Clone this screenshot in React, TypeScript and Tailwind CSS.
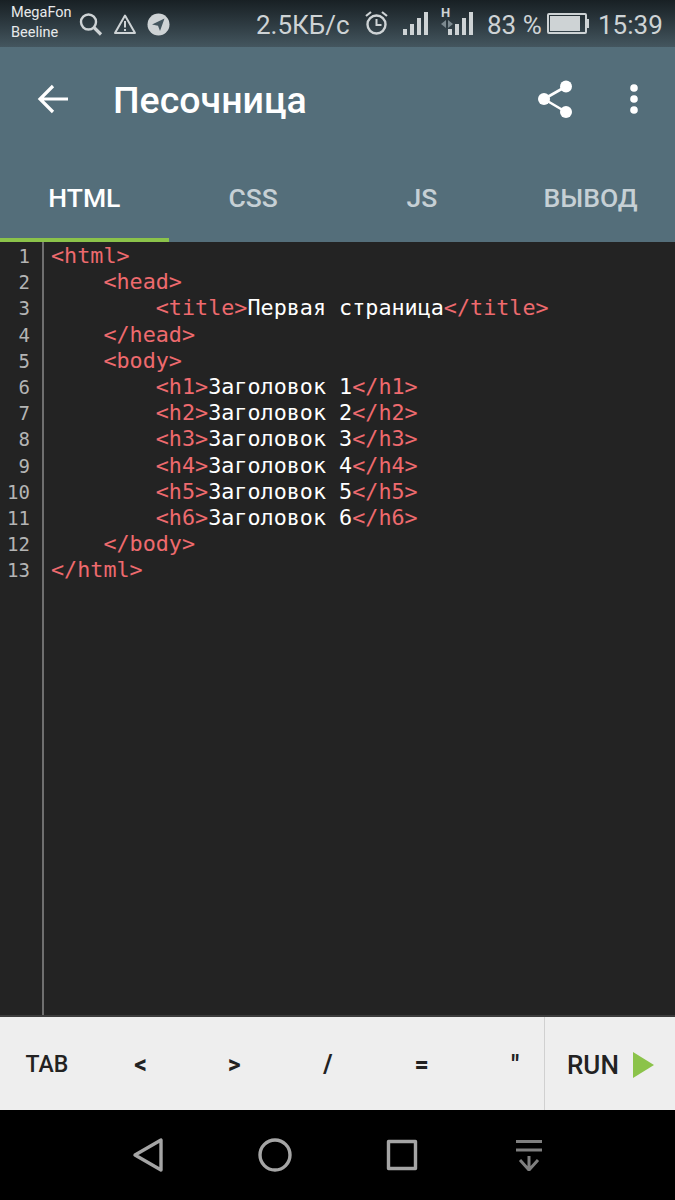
import React from 'react';

// Строки редактора: отступ в символах, теги и текст
const codeLines: { indent: number; open: string; text?: string; close?: string }[] = [
  { indent: 0, open: '<html>' },
  { indent: 4, open: '<head>' },
  { indent: 8, open: '<title>', text: 'Первая страница', close: '</title>' },
  { indent: 4, open: '</head>' },
  { indent: 4, open: '<body>' },
  { indent: 8, open: '<h1>', text: 'Заголовок 1', close: '</h1>' },
  { indent: 8, open: '<h2>', text: 'Заголовок 2', close: '</h2>' },
  { indent: 8, open: '<h3>', text: 'Заголовок 3', close: '</h3>' },
  { indent: 8, open: '<h4>', text: 'Заголовок 4', close: '</h4>' },
  { indent: 8, open: '<h5>', text: 'Заголовок 5', close: '</h5>' },
  { indent: 8, open: '<h6>', text: 'Заголовок 6', close: '</h6>' },
  { indent: 4, open: '</body>' },
  { indent: 0, open: '</html>' },
];

const tabs = ['HTML', 'CSS', 'JS', 'ВЫВОД'];
const symbolKeys = ['<', '>', '/', '=', '"'];

const StatusBar: React.FC = () => (
  <div className="relative h-[47px] bg-gradient-to-b from-[#182024] to-[#44565f] text-[#ced3d5]">
    <div className="absolute left-[11px] top-[3px] text-[14.5px] leading-[20px] text-[#e8eaeb]">
      <div>MegaFon</div>
      <div>Beeline</div>
    </div>
    <svg className="absolute left-[78px] top-[12px]" width="26" height="24" viewBox="0 0 26 24" fill="none" stroke="#ced3d5">
      <circle cx="10.5" cy="10" r="7.5" strokeWidth="2.4" />
      <path d="M16 15.5l7 7" strokeWidth="3.2" />
    </svg>
    <svg className="absolute left-[113px] top-[13px]" width="24" height="22" viewBox="0 0 24 22" fill="none">
      <path d="M12 2.5L22 20H2Z" stroke="#ced3d5" strokeWidth="2" strokeLinejoin="round" />
      <path d="M12 8v6.5M12 16v2" stroke="#ced3d5" strokeWidth="2" />
    </svg>
    <svg className="absolute left-[147px] top-[13px]" width="23" height="23" viewBox="0 0 23 23">
      <circle cx="11.5" cy="11.5" r="11" fill="#ced3d5" />
      <path d="M5 11.5L17.5 5.5 13 18l-2-5.2Z" fill="#44565f" />
    </svg>
    <span className="absolute left-[256px] top-[8px] text-[26px] leading-[34px]">2.5КБ/с</span>
    <svg className="absolute left-[364px] top-[10px]" width="25" height="26" viewBox="0 0 25 26" fill="none" stroke="#ced3d5">
      <circle cx="12.5" cy="14.5" r="9" strokeWidth="2.4" />
      <path d="M12.5 9v6h5" strokeWidth="2" />
      <path d="M2 6l5-4M23 6l-5-4" strokeWidth="2.2" />
    </svg>
    <div className="absolute left-[403px] top-[12px] flex h-[23px] items-end gap-[3px]">
      <div className="h-[6px] w-[4px] bg-[#ced3d5]" />
      <div className="h-[11px] w-[4px] bg-[#ced3d5]" />
      <div className="h-[17px] w-[4px] bg-[#ced3d5]" />
      <div className="h-[23px] w-[4px] bg-[#ced3d5]" />
    </div>
    <span className="absolute left-[441px] top-[6px] text-[13px] font-bold leading-[14px]">H</span>
    <svg className="absolute left-[441px] top-[20px]" width="12" height="8" viewBox="0 0 12 8" fill="#7d8a90">
      <path d="M5 0v8L0 4ZM7 0v8l5-4Z" />
    </svg>
    <div className="absolute left-[448px] top-[12px] flex h-[23px] items-end gap-[3px]">
      <div className="h-[6px] w-[4px] bg-[#ced3d5]" />
      <div className="h-[11px] w-[4px] bg-[#ced3d5]" />
      <div className="h-[17px] w-[4px] bg-[#ced3d5]" />
      <div className="h-[23px] w-[4px] bg-[#ced3d5]" />
    </div>
    <span className="absolute left-[487px] top-[8px] text-[26px] leading-[34px]">83 %</span>
    <div className="absolute left-[547px] top-[13px] flex h-[21px] w-[40px] items-center rounded-[2px] border-2 border-[#ced3d5] p-[1px]">
      <div className="h-full w-[30px] bg-[#ced3d5]" />
    </div>
    <div className="absolute left-[587px] top-[19px] h-[9px] w-[2px] bg-[#ced3d5]" />
    <span className="absolute left-[598px] top-[8px] text-[26px] leading-[34px]">15:39</span>
  </div>
);

const AppBar: React.FC = () => (
  <div className="bg-[#546e7a]">
    <div className="flex h-[109px] items-center">
      <svg className="mb-[5px] ml-[37px]" width="32" height="32" viewBox="0 0 32 32" fill="none" stroke="white" strokeWidth="3.2">
        <path d="M31 16H3M16 3L3 16l13 13" />
      </svg>
      <span className="mb-[3px] ml-[44px] text-[37.5px] font-medium leading-[40px] text-white">Песочница</span>
      <svg className="mr-[57px] mb-[5px] ml-auto" width="36" height="38" viewBox="0 0 36 38" fill="white">
        <circle cx="7" cy="19" r="6" />
        <circle cx="29" cy="6.5" r="6" />
        <circle cx="29" cy="32" r="6" />
        <path d="M7 19L29 6.5M7 19l22 13" stroke="white" strokeWidth="2.6" />
      </svg>
      <svg className="mr-[37px] mb-[5px]" width="8" height="30" viewBox="0 0 8 30" fill="white">
        <circle cx="4" cy="4" r="3.8" />
        <circle cx="4" cy="15" r="3.8" />
        <circle cx="4" cy="26" r="3.8" />
      </svg>
    </div>
    <div className="flex h-[86px]">
      {tabs.map((tab, i) => (
        <div
          key={tab}
          className={`flex flex-1 items-center justify-center border-b-4 pt-[2px] text-[26.5px] font-medium ${
            i === 0 ? 'border-[#8bc34a] text-white' : 'border-transparent text-[#c6d0d5]'
          }`}
        >
          {tab}
        </div>
      ))}
    </div>
  </div>
);

const Editor: React.FC = () => (
  <div className="flex h-[773px] bg-[#232323] font-['DejaVu_Sans_Mono',monospace] text-[21.75px] leading-[26.2px]">
    <div className="w-[44px] shrink-0 border-r-2 border-[#6f6f6f] pt-[1px] pr-[12px] text-right text-[#b4b4b4]">
      {codeLines.map((_, i) => (
        <div key={i} className="h-[26.2px] text-[19px]">{i + 1}</div>
      ))}
    </div>
    <div className="whitespace-pre pt-[1px] pl-[7px] text-[#ee6a6e]">
      {codeLines.map((line, i) => (
        <div key={i} className="h-[26.2px]">
          {' '.repeat(line.indent)}
          {line.open}
          {line.text && <span className="text-white">{line.text}</span>}
          {line.close}
        </div>
      ))}
    </div>
  </div>
);

const KeyBar: React.FC = () => (
  <div className="flex h-[95px] border-t-2 border-[#3c3c3c] bg-[#eeeeee] pt-[3px] text-[#222222]">
    <div className="flex w-[544px]">
      <div className="flex w-[93.7px] shrink-0 items-center justify-center text-[23px] font-medium">TAB</div>
      {symbolKeys.map((key) => (
        <div key={key} className="flex w-[93.7px] shrink-0 items-center justify-center text-[25px] font-bold">
          {key}
        </div>
      ))}
    </div>
    <div className="-mt-[3px] flex flex-1 items-center border-l border-[#d0d0d0] pt-[3px] pl-[22px]">
      <span className="text-[26px] font-medium">RUN</span>
      <svg className="ml-[14px]" width="21" height="26" viewBox="0 0 21 26" fill="#8bc34a">
        <path d="M0 0l21 13L0 26Z" />
      </svg>
    </div>
  </div>
);

const NavBar: React.FC = () => (
  <div className="flex h-[90px] items-center justify-center bg-black pl-[1px]">
    <div className="flex w-[127px] justify-center">
      <svg width="32" height="36" viewBox="0 0 32 36" fill="none" stroke="#a5a5a5" strokeWidth="3.4" strokeLinejoin="round">
        <path d="M29 3v30L3 18Z" />
      </svg>
    </div>
    <div className="flex w-[127px] justify-center">
      <svg width="34" height="34" viewBox="0 0 34 34" fill="none" stroke="#a5a5a5" strokeWidth="3.4">
        <circle cx="17" cy="17" r="15" />
      </svg>
    </div>
    <div className="flex w-[127px] justify-center">
      <svg width="32" height="32" viewBox="0 0 32 32" fill="none" stroke="#a5a5a5" strokeWidth="3.4" strokeLinejoin="round">
        <rect x="2.5" y="2.5" width="27" height="27" />
      </svg>
    </div>
    <div className="flex w-[127px] justify-center">
      <svg width="28" height="32" viewBox="0 0 28 32" fill="none" stroke="#7f7f7f" strokeWidth="3">
        <path d="M1 2.5h26M1 11h26M14 17v14M5 21l9 10 9-10" />
      </svg>
    </div>
  </div>
);

export default function App() {
  return (
    <div className="h-[1200px] w-[675px] overflow-hidden font-['Roboto',sans-serif]">
      <StatusBar />
      <AppBar />
      <Editor />
      <KeyBar />
      <NavBar />
    </div>
  );
}
